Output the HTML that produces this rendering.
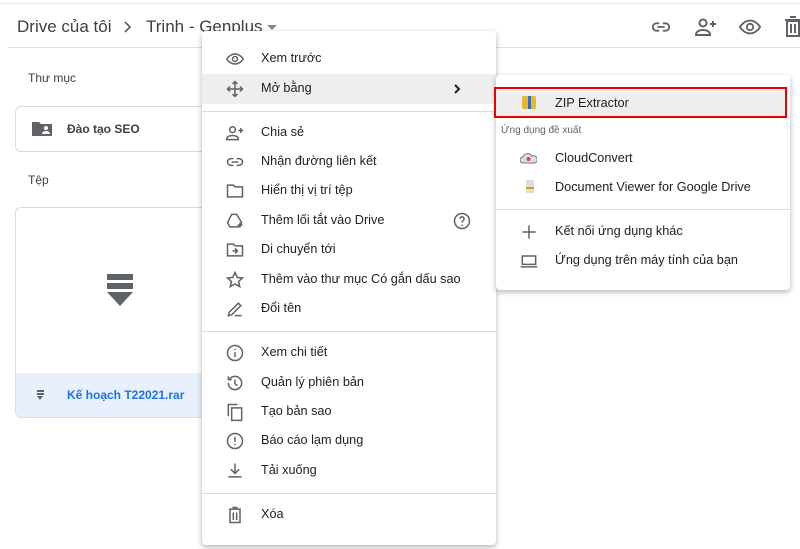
<!DOCTYPE html>
<html><head><meta charset="utf-8"><style>
*{margin:0;padding:0;box-sizing:border-box}
body{width:800px;height:549px;overflow:hidden;background:#fff;font-family:"Liberation Sans",Arial,sans-serif;color:#3c4043;position:relative}
.a{position:absolute}
.t{font-size:12.7px;color:#202124;white-space:nowrap}
.ic{position:absolute;width:20px;height:20px}
.ic svg{width:20px;height:20px;fill:none;stroke:#5f6368;stroke-width:1.8}
.div{position:absolute;height:1px;background:#dadce0}
</style></head><body>
<div class="a" style="left:0;top:2px;width:800px;height:3px;background:#f1f3f4"></div>
<div class="a" style="left:17px;top:17px;font-size:17px;color:#3c4043">Drive của tôi</div>
<svg class="a" style="left:122px;top:20px" width="10" height="14" viewBox="0 0 10 14" fill="none" stroke="#5f6368" stroke-width="1.8"><path d="M3 2l5 5-5 5"/></svg>
<div class="a" style="left:146px;top:17px;font-size:17px;color:#3c4043">Trinh - Genplus</div>
<div class="a" style="left:267px;top:25px;border:5px solid transparent;border-top-color:#888"></div>
<div class="a" style="left:8px;top:47px;width:792px;height:1px;background:#e0e0e0"></div>
<svg class="a" style="left:650px;top:16px" width="22" height="22" viewBox="0 0 24 24" fill="none" stroke="#5f6368" stroke-width="2"><path d="M10 8H7a4 4 0 000 8h3M14 8h3a4 4 0 010 8h-3M8 12h8"/></svg>
<svg class="a" style="left:694px;top:15px" width="24" height="24" viewBox="0 0 24 24" fill="none" stroke="#5f6368" stroke-width="2"><circle cx="9" cy="8" r="3.5"/><path d="M2 20c0-4 4-5 7-5s7 1 7 5zM19 6v6M16 9h6"/></svg>
<svg class="a" style="left:738px;top:16px" width="24" height="22" viewBox="0 0 24 24" fill="none" stroke="#5f6368" stroke-width="2"><path d="M1 12s4-7 11-7 11 7 11 7-4 7-11 7S1 12 1 12z"/><circle cx="12" cy="12" r="3.5"/></svg>
<svg class="a" style="left:784px;top:15px" width="18" height="24" viewBox="0 0 18 24" fill="none" stroke="#5f6368" stroke-width="2"><path d="M3 6h12v15H3zM1 5h16M6 2h6M7 9v9M11 9v9"/></svg>

<div class="a t" style="left:28px;top:71px;font-size:12px;color:#3c4043">Thư mục</div>
<div class="a" style="left:15px;top:106px;width:200px;height:46px;border:1px solid #dadce0;border-radius:6px"></div>
<svg class="a" style="left:31px;top:120px" width="22" height="18" viewBox="0 0 22 18"><path d="M1 2h7l2 2h11v12H1z" fill="#5f6368"/><circle cx="15" cy="8" r="2" fill="#fff"/><path d="M11 14c0-2 2-3 4-3s4 1 4 3z" fill="#fff"/></svg>
<div class="a t" style="left:67px;top:122px;font-size:12px;font-weight:bold;color:#3c4043">Đào tạo SEO</div>
<div class="a t" style="left:28px;top:173px;font-size:12px;color:#3c4043">Tệp</div>
<div class="a" style="left:15px;top:207px;width:200px;height:211px;border:1px solid #dadce0;border-radius:6px;overflow:hidden"><div class="a" style="left:0;top:165px;width:200px;height:46px;background:#e8f0fe"></div></div>
<div class="a" style="left:107px;top:274px;width:26px;height:6px;background:#5f6368"></div>
<div class="a" style="left:107px;top:283px;width:26px;height:6px;background:#5f6368"></div>
<div class="a" style="left:107px;top:292px;border-left:13px solid transparent;border-right:13px solid transparent;border-top:14px solid #5f6368"></div>
<div class="a" style="left:37px;top:390px;width:7px;height:2px;background:#5f6368;box-shadow:0 3px 0 #5f6368"></div>
<div class="a" style="left:37px;top:396px;border-left:3.5px solid transparent;border-right:3.5px solid transparent;border-top:4px solid #5f6368"></div>
<div class="a t" style="left:67px;top:388px;font-size:12px;font-weight:bold;color:#1a73e8">Kế hoạch T22021.rar</div>

<div class="a" style="left:202px;top:31px;width:294px;height:514px;background:#fff;border-radius:4px;box-shadow:0 2px 6px rgba(0,0,0,.3)">
<div class="a" style="left:0;top:43px;width:294px;height:30px;background:#eeeeee"></div>
<div class="div" style="left:0;top:80px;width:294px"></div>
<div class="div" style="left:0;top:300px;width:294px"></div>
<div class="div" style="left:0;top:462px;width:294px"></div>
</div>
<svg class="a" style="left:453px;top:84px" width="8" height="10" viewBox="0 0 8 10" fill="none" stroke="#202124" stroke-width="2"><path d="M2 1l4 4-4 4"/></svg>
<div class="a t" style="left:261px;top:51px">Xem trước</div>
<div class="a t" style="left:261px;top:81px">Mở bằng</div>
<div class="a t" style="left:261px;top:125px">Chia sẻ</div>
<div class="a t" style="left:261px;top:154px">Nhận đường liên kết</div>
<div class="a t" style="left:261px;top:183px">Hiển thị vị trí tệp</div>
<div class="a t" style="left:261px;top:213px">Thêm lối tắt vào Drive</div>
<div class="a t" style="left:261px;top:242px">Di chuyển tới</div>
<div class="a t" style="left:261px;top:272px">Thêm vào thư mục Có gắn dấu sao</div>
<div class="a t" style="left:261px;top:301px">Đổi tên</div>
<div class="a t" style="left:261px;top:345px">Xem chi tiết</div>
<div class="a t" style="left:261px;top:375px">Quản lý phiên bản</div>
<div class="a t" style="left:261px;top:404px">Tạo bản sao</div>
<div class="a t" style="left:261px;top:433px">Báo cáo lạm dụng</div>
<div class="a t" style="left:261px;top:463px">Tải xuống</div>
<div class="a t" style="left:261px;top:507px">Xóa</div>
<div class="ic" style="left:225px;top:49px"><svg viewBox="0 0 24 24"><path d="M2 12s4-6 10-6 10 6 10 6-4 6-10 6S2 12 2 12z"/><circle cx="12" cy="12" r="3"/></svg></div>
<div class="ic" style="left:225px;top:79px"><svg viewBox="0 0 24 24"><path d="M12 3v18M3 12h18M9 6l3-3 3 3M9 18l3 3 3-3M6 9l-3 3 3 3M18 9l3 3-3 3"/></svg></div>
<div class="ic" style="left:225px;top:123px"><svg viewBox="0 0 24 24"><circle cx="9" cy="8" r="3.5"/><path d="M2 20c0-4 4-5 7-5s7 1 7 5zM19 6v6M16 9h6"/></svg></div>
<div class="ic" style="left:225px;top:152px"><svg viewBox="0 0 24 24"><path d="M10 8H7a4 4 0 000 8h3M14 8h3a4 4 0 010 8h-3M8 12h8"/></svg></div>
<div class="ic" style="left:225px;top:181px"><svg viewBox="0 0 24 24"><path d="M3 5h7l2 2h9v12H3z"/></svg></div>
<div class="ic" style="left:225px;top:211px"><svg viewBox="0 0 24 24"><path d="M8 4h6l6 10-3 5H6l-3-5zM15 17h6M18 14v6"/></svg></div>
<div class="ic" style="left:225px;top:240px"><svg viewBox="0 0 24 24"><path d="M3 5h7l2 2h9v12H3zM9 13h6M12 10l3 3-3 3"/></svg></div>
<div class="ic" style="left:225px;top:270px"><svg viewBox="0 0 24 24"><path d="M12 3l2.8 6 6.2.6-4.7 4.2 1.4 6.2L12 16.8 6.3 20l1.4-6.2L3 9.6 9.2 9z"/></svg></div>
<div class="ic" style="left:225px;top:299px"><svg viewBox="0 0 24 24"><path d="M4 20l1-4L16 5l3 3L8 19zM12 20h8"/></svg></div>
<div class="ic" style="left:225px;top:343px"><svg viewBox="0 0 24 24"><circle cx="12" cy="12" r="9"/><path d="M12 11v6M12 7v1.5"/></svg></div>
<div class="ic" style="left:225px;top:373px"><svg viewBox="0 0 24 24"><path d="M4 12a8 8 0 108-8 8 8 0 00-7 4M4 4v4h4M12 8v5l3 2"/></svg></div>
<div class="ic" style="left:225px;top:402px"><svg viewBox="0 0 24 24"><path d="M4 17V3h11M8 7h12v15H8z"/></svg></div>
<div class="ic" style="left:225px;top:431px"><svg viewBox="0 0 24 24"><circle cx="12" cy="12" r="9"/><path d="M12 7v6M12 15.5V17"/></svg></div>
<div class="ic" style="left:225px;top:461px"><svg viewBox="0 0 24 24"><path d="M12 3v12M7 10l5 5 5-5M4 19h16"/></svg></div>
<div class="ic" style="left:225px;top:505px"><svg viewBox="0 0 24 24"><path d="M5 5h14M6 5v16h12V5M10 9v9M14 9v9M9 3h6"/></svg></div>
<div class="ic" style="left:452px;top:211px"><svg viewBox="0 0 24 24"><circle cx="12" cy="12" r="9"/><path d="M9.5 9.5a2.5 2.5 0 114 2c-1 .7-1.5 1.2-1.5 2.5M12 16.5V18"/></svg></div>

<div class="a" style="left:496px;top:75px;width:294px;height:215px;background:#fff;border-radius:4px;box-shadow:0 2px 6px rgba(0,0,0,.3)">
<div class="a" style="left:-2px;top:12px;width:293px;height:31px;background:#eeeeee;border:2px solid #e00"></div>
<div class="div" style="left:0;top:134px;width:294px"></div>
</div>
<div class="a" style="left:522px;top:96px;width:14px;height:13px;background:#e8b92a;border-radius:2px"></div>
<div class="a" style="left:528px;top:96px;width:3px;height:13px;background:#3b6bbf"></div>
<div class="a t" style="left:555px;top:96px">ZIP Extractor</div>
<div class="a t" style="left:501px;top:125px;font-size:10px;color:#5f6368">Ứng dụng đề xuất</div>
<svg class="a" style="left:520px;top:151px" width="17" height="13" viewBox="0 0 17 13"><path d="M3 12a3 3 0 010-6 5 5 0 019-1 3.5 3.5 0 013 7z" fill="#ddd" stroke="#777"/><circle cx="8.5" cy="8" r="2" fill="#d44"/></svg>
<div class="a" style="left:526px;top:180px;width:8px;height:13px;background:#ddd"></div><div class="a" style="left:526px;top:187px;width:8px;height:2px;background:#d9a400"></div>
<div class="a t" style="left:555px;top:151px">CloudConvert</div>
<div class="a t" style="left:555px;top:180px">Document Viewer for Google Drive</div>
<div class="ic" style="left:519px;top:222px"><svg viewBox="0 0 24 24"><path d="M12 4v16M4 12h16"/></svg></div>
<div class="ic" style="left:519px;top:251px"><svg viewBox="0 0 24 24"><path d="M4 6h16v10H4zM2 19h20"/></svg></div>
<div class="a t" style="left:555px;top:224px">Kết nối ứng dụng khác</div>
<div class="a t" style="left:555px;top:253px">Ứng dụng trên máy tính của bạn</div>
</body></html>
